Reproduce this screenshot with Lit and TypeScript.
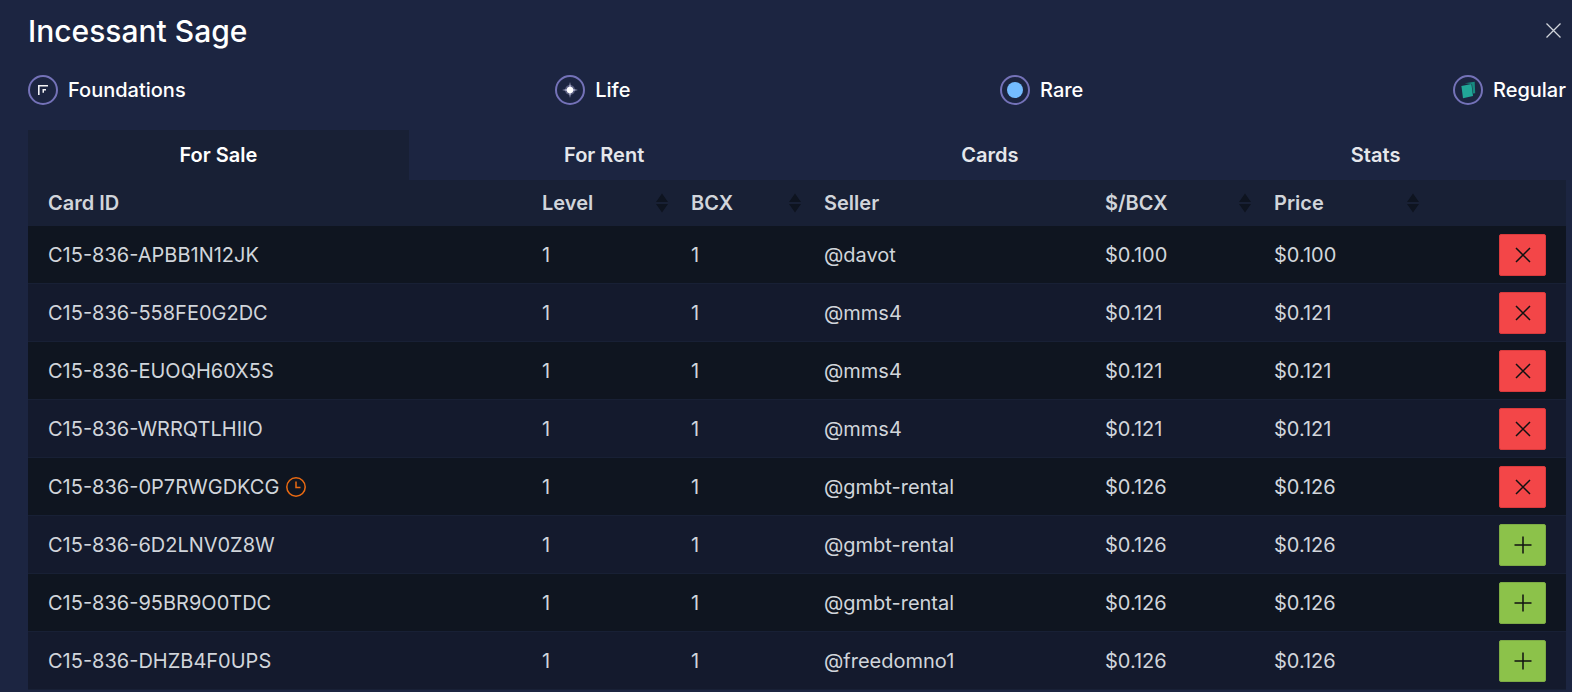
import { LitElement, html, css } from "lit";
import { customElement } from "lit/decorators.js";

const rows: [string, string, string, boolean, boolean?][] = [
  ["C15-836-APBB1N12JK", "@davot", "$0.100", true],
  ["C15-836-558FE0G2DC", "@mms4", "$0.121", true],
  ["C15-836-EUOQH60X5S", "@mms4", "$0.121", true],
  ["C15-836-WRRQTLHIIO", "@mms4", "$0.121", true],
  ["C15-836-0P7RWGDKCG", "@gmbt-rental", "$0.126", true, true],
  ["C15-836-6D2LNV0Z8W", "@gmbt-rental", "$0.126", false],
  ["C15-836-95BR9O0TDC", "@gmbt-rental", "$0.126", false],
  ["C15-836-DHZB4F0UPS", "@freedomno1", "$0.126", false],
];

const sort = html`<svg class="sort" width="14" height="20" viewBox="0 0 14 20"><path d="M7 0.5 L13 9 H1 Z M1 11 H13 L7 19.5 Z" fill="#0e1420"/></svg>`;

@customElement("app-root")
export class AppRoot extends LitElement {
  static styles = css`
    :host { display: block; width: 1572px; height: 692px; overflow: hidden; background: #1c2541; font-family: Inter, "Noto Sans", sans-serif; color: #fff; }
    .wrap { padding: 0 6px 0 28px; }
    .head { display: flex; justify-content: space-between; align-items: flex-start; height: 75px; padding-top: 13px; box-sizing: border-box; }
    h1 { margin: 0; font-size: 30px; font-weight: 500; line-height: 36px; }
    .close { display: block; margin: 10px 5px 0 0; }
    .attrs { display: flex; justify-content: space-between; height: 55px; }
    .attr { display: flex; align-items: flex-start; gap: 10px; font-size: 20px; font-weight: 500; line-height: 30px; color: #fff; }
    .ring { width: 30px; height: 30px; box-sizing: border-box; border: 2px solid #7472b8; border-radius: 50%; display: flex; align-items: center; justify-content: center; }
    .dot { width: 16px; height: 16px; border-radius: 50%; background: #74bcff; }
    .tabs { display: flex; gap: 5px; height: 50px; }
    .tab { width: 381px; text-align: center; font-size: 20px; font-weight: 600; line-height: 50px; color: #e5e7eb; }
    .tab.on { background: #182035; color: #fff; }
    table { width: 100%; border-collapse: collapse; table-layout: fixed; font-size: 20px; }
    th { background: #182035; height: 46px; padding: 0 0 0 20px; text-align: left; font-weight: 600; color: #d1d5db; }
    .th { display: flex; justify-content: space-between; align-items: center; padding-right: 2px; }
    td { height: 57px; padding: 0 0 0 20px; color: #d1d5db; border-bottom: 1px solid #182035; }
    tr:nth-child(odd) td { background: #0f1520; }
    tr:nth-child(even) td { background: #141a2d; }
    .id { display: flex; align-items: center; gap: 7px; }
    .btn { width: 47px; height: 42px; margin: 0 20px 0 auto; box-sizing: border-box; border-radius: 2px; display: flex; align-items: center; justify-content: center; }
    .btn.x { background: #f34648; border: 1px solid #d93a3c; }
    .btn.p { background: #8cc24a; border: 1px solid #7dab45; }
    td.act { padding: 0; }
    .c1 { width: 494px; } .c2 { width: 149px; } .c3 { width: 133px; } .c4 { width: 281px; } .c5 { width: 169px; } .c6 { width: 168px; }
  `;

  private icon(kind: string) {
    if (kind === "f") return html`<svg width="14" height="14" viewBox="0 0 14 14"><path d="M2 2 H12 V3.6 H3.6 V12 H2 Z M6.5 6 H10 V7.5 H8 V9.8 H6.5 Z" fill="#f3f4f6"/></svg>`;
    if (kind === "l") return html`<svg width="18" height="18" viewBox="0 0 18 18"><circle cx="9" cy="9" r="5" fill="#8f91b8" opacity=".55"/><path d="M9 1 L10.2 7.8 L17 9 L10.2 10.2 L9 17 L7.8 10.2 L1 9 L7.8 7.8 Z" fill="#b4b6d4"/><circle cx="9" cy="9" r="3.2" fill="#fff"/></svg>`;
    if (kind === "r") return html`<div class="dot"></div>`;
    return html`<svg width="20" height="20" viewBox="0 0 20 20"><path d="M6.7 3.3 L16.7 1.7 L17.2 13.3 L15 13.5 L14 4 Z" fill="#178a7f"/><path d="M3.4 6 L13.4 4 L15 16 L5 18.3 Z" fill="#21a698"/></svg>`;
  }

  render() {
    const attrs: [string, string][] = [["f", "Foundations"], ["l", "Life"], ["r", "Rare"], ["g", "Regular"]];
    return html`<div class="wrap">
      <div class="head">
        <h1>Incessant Sage</h1>
        <svg class="close" width="15" height="15" viewBox="0 0 15 15"><path d="M0.5 0.5 L14.5 14.5 M14.5 0.5 L0.5 14.5" stroke="#d1d5db" stroke-width="1.3"/></svg>
      </div>
      <div class="attrs">
        ${attrs.map(([k, n]) => html`<div class="attr"><div class="ring">${this.icon(k)}</div>${n}</div>`)}
      </div>
      <div class="tabs">
        <div class="tab on">For Sale</div><div class="tab">For Rent</div><div class="tab">Cards</div><div class="tab">Stats</div>
      </div>
      <table>
        <colgroup><col class="c1"/><col class="c2"/><col class="c3"/><col class="c4"/><col class="c5"/><col class="c6"/><col/></colgroup>
        <thead><tr>
          <th>Card ID</th>
          <th><div class="th">Level${sort}</div></th>
          <th><div class="th">BCX${sort}</div></th>
          <th>Seller</th>
          <th><div class="th">$/BCX${sort}</div></th>
          <th><div class="th">Price${sort}</div></th>
          <th></th>
        </tr></thead>
        <tbody>
          ${rows.map(([id, seller, price, owned, clock]) => html`<tr>
            <td><div class="id">${id}${clock ? html`<svg width="20" height="20" viewBox="0 0 20 20" fill="none" stroke="#ea6a12" stroke-width="1.5"><circle cx="10" cy="10" r="9.2"/><path d="M10 4.5 V10.5 H14.5"/></svg>` : ""}</div></td>
            <td>1</td><td>1</td><td>${seller}</td><td>${price}</td><td>${price}</td>
            <td class="act"><div class="btn ${owned ? "x" : "p"}">
              <svg width="18" height="18" viewBox="0 0 18 18"><path d="${owned ? "M2 2 L16 16 M16 2 L2 16" : "M9 0.5 V17.5 M0.5 9 H17.5"}" stroke="#111" stroke-width="1.5" fill="none"/></svg>
            </div></td>
          </tr>`)}
        </tbody>
      </table>
    </div>`;
  }
}
